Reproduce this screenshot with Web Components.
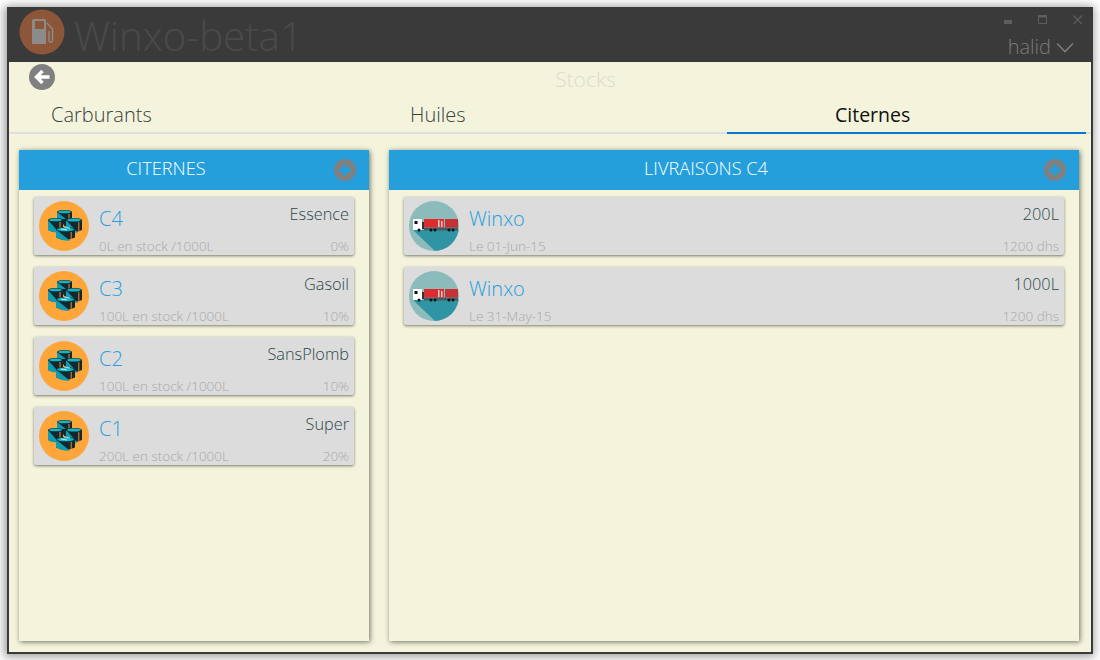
<!DOCTYPE html>
<html><head><meta charset="utf-8"><style>
html,body{margin:0;padding:0;background:#fff;width:1100px;height:660px;overflow:hidden}
body{font-family:"Open Sans","Noto Sans",sans-serif}
</style></head><body>
<app-window>
  <title-bar slot="bar"></title-bar>
  <stock-head></stock-head>
  <tab-bar></tab-bar>
  <div style="display:flex;gap:20px;padding:16px 13px 0 10px;flex:1;min-height:0">
    <list-panel title-text="CITERNES" style="width:350px">
      <tank-card name="C4" kind="Essence" stock="0L en stock /1000L" pct="0%"></tank-card>
      <tank-card name="C3" kind="Gasoil" stock="100L en stock /1000L" pct="10%"></tank-card>
      <tank-card name="C2" kind="SansPlomb" stock="100L en stock /1000L" pct="10%"></tank-card>
      <tank-card name="C1" kind="Super" stock="200L en stock /1000L" pct="20%"></tank-card>
    </list-panel>
    <list-panel title-text="LIVRAISONS C4" style="width:690px">
      <tank-card truck name="Winxo" kind="200L" stock="Le 01-Jun-15" pct="1200 dhs"></tank-card>
      <tank-card truck name="Winxo" kind="1000L" stock="Le 31-May-15" pct="1200 dhs"></tank-card>
    </list-panel>
  </div>
</app-window>
<script>
function def(name,html){customElements.define(name,class extends HTMLElement{connectedCallback(){if(this.shadowRoot)return;const r=this.attachShadow({mode:'open'});r.innerHTML=html(this);}});}
const F='"Open Sans","Noto Sans",sans-serif';
def('app-window',()=>`<style>
:host{display:block;position:absolute;left:7px;top:7px;width:1086px;height:647px;box-sizing:border-box;box-shadow:-1px 1px 9px 2px rgba(0,0,0,.38)}
.w{display:flex;flex-direction:column;height:100%;box-sizing:border-box;background:#f4f4dc;border:2px solid #3a3a3a;border-top:0}
.c{flex:1;display:flex;flex-direction:column;min-height:0;margin-bottom:11px}
</style><div class="w"><slot name="bar"></slot><div class="c"><slot></slot></div></div>`);
def('title-bar',()=>`<style>
:host{display:flex;height:55px;background:#3a3a3a;margin:0 -2px;align-items:center;font-family:${F}}
.logo{width:46px;height:46px;margin:2px 0 0 12px;align-self:flex-start;flex:none}
.t{font-size:40.200px;font-weight:300;color:#4a4a4a;margin-left:9px;line-height:1;padding-top:3px}
.r{margin-left:auto;align-self:stretch;display:flex;flex-direction:column;align-items:flex-end;padding:8px 10px 0 0}
.ctl{display:flex;gap:25px;height:20px;align-items:flex-start}
.u{font-size:20px;font-weight:300;color:#7c7c7c;display:flex;align-items:center;gap:5px;line-height:26px;margin-top:-1px;padding-right:9px}
</style>
<svg class="logo" viewBox="0 0 46 46"><circle cx="23" cy="23" r="22.500" fill="#8e5638"/>
<path d="M13 12a2 2 0 0 1 2-2h10a2 2 0 0 1 2 2V35H13z" fill="#8b8b8b"/>
<rect x="16" y="12" width="9" height="8" fill="#8e5638"/>
<path d="M28 14l5.500 6v11c0 3-3.500 3-3.500 0v-9" fill="none" stroke="#8b8b8b" stroke-width="1.400"/></svg>
<div class="t">Winxo-beta1</div>
<div class="r"><div class="ctl">
<svg width="10" height="10" viewBox="0 0 10 10"><rect x="1" y="5" width="8" height="4" fill="#5e5e5e"/></svg>
<svg width="10" height="10" viewBox="0 0 10 10"><path d="M.5.500h8v8h-8z" fill="none" stroke="#5e5e5e"/><rect width="9" height="2.500" fill="#5e5e5e"/></svg>
<svg width="10" height="10" viewBox="0 0 10 10"><path d="M.5.500l8.500 8.500m0-8.500l-8.500 8.500" stroke="#5e5e5e" stroke-width="1.100" fill="none"/></svg>
</div><div class="u"><span>halid</span><svg width="18" height="11" viewBox="0 0 18 11"><path d="M1 1.500l8 8 8-8" fill="none" stroke="#7c7c7c" stroke-width="1.600"/></svg></div></div>`);
def('stock-head',()=>`<style>
:host{display:flex;height:35px;position:relative;justify-content:center;align-items:center;font-family:${F}}
svg{position:absolute;left:20px;top:2px}
.s{font-size:21px;font-weight:300;color:#dcdccb;padding:0 0 2px 78px;margin-left:-7px}
</style><svg width="26" height="26" viewBox="0 0 26 26"><circle cx="13" cy="13" r="13" fill="#808080"/><path d="M20.500 13H8M13.500 7l-6 6 6 6" fill="none" stroke="#fff" stroke-width="3.400"/></svg><div class="s">Stocks</div>`);
def('tab-bar',()=>`<style>
:host{display:grid;grid-template-columns:359px 359px 359px;height:37px;border-bottom:2px solid #dfdfdf;box-sizing:border-box;font-family:${F};font-size:20px;font-weight:300;color:#38403f;line-height:36px}
div{white-space:nowrap}
.a{color:#111;border-bottom:2px solid #0a78d0;height:37px;box-sizing:border-box;font-weight:400;font-size:19.500px}
</style><div style="padding-left:42px">Carburants</div><div style="padding-left:42px">Huiles</div><div class="a" style="padding-left:108px">Citernes</div>`);
def('list-panel',h=>`<style>
:host{display:flex;flex-direction:column;background:#f4f4dc;box-shadow:1px 1px 5px rgba(0,0,0,.55);font-family:${F};height:491px;flex:none}
.h{height:40px;background:#259fdc;color:#fff;font-size:18.200px;font-weight:300;display:flex;align-items:center;justify-content:center;position:relative;padding:0 56px 4px 0;box-sizing:border-box}
svg{position:absolute;right:13px;top:9px}
.b{display:flex;flex-direction:column;gap:12px;padding:7px 15px}
</style><div class="h"><span>${h.getAttribute('title-text')}</span><svg width="22" height="22" viewBox="0 0 22 22"><circle cx="11" cy="11" r="11" fill="#808080"/><path d="M11 5.500v11M5.500 11h11" stroke="#259fdc" stroke-width="4"/></svg></div><div class="b"><slot></slot></div>`);
const cyl=(cx,top,w,h)=>{const a=w/2,b=w*.13;return `<path d="M${cx-a} ${top+b}V${top+h-b}Q${cx} ${top+h+b} ${cx+a} ${top+h-b}V${top+b}z" fill="#10282e"/><path d="M${cx-a} ${top+b}V${top+h-b}Q${cx-a*.2} ${top+h+b*.7} ${cx+a*.45} ${top+h+b*.2}z" fill="#0f9bb0"/><path d="M${cx+a*.6} ${top+b*2}V${top+h-1}" stroke="#f08a30" stroke-width="1"/><ellipse cx="${cx}" cy="${top+b}" rx="${a}" ry="${b}" fill="#10282e"/><ellipse cx="${cx}" cy="${top+b}" rx="${a-1}" ry="${b-.6}" fill="#12b4c6"/>`;};
const tank=`<svg class="i" width="50" height="50" viewBox="0 0 50 50"><circle cx="25" cy="25" r="25" fill="#ffa63a"/>
${cyl(25.500,9,15,10)}<path d="M21 18L26 26 31 18z" fill="#10282e"/>${cyl(16.500,17,15,14)}${cyl(35,17,16,14)}${cyl(26.500,26,19,13)}<path d="M22 28l6 1m-3-3l6 1" stroke="#e8ffff" stroke-width=".8"/>
</svg>`;
const truck=`<svg class="i" width="50" height="50" viewBox="0 0 50 50"><defs><clipPath id="c"><circle cx="25" cy="25" r="25"/></clipPath></defs><circle cx="25" cy="25" r="25" fill="#8bbcbb"/>
<path d="M4 29H50V50H26z" fill="#2f95a5" clip-path="url(#c)"/>
<g clip-path="url(#c)"><rect x="4" y="18" width="9" height="11" fill="#fff"/><rect x="5.500" y="20" width="3" height="3" fill="#111"/><rect x="13" y="21" width="2" height="7" fill="#333"/><rect x="15" y="18" width="20" height="8.500" fill="#df2a2e"/><rect x="36" y="18" width="13" height="8.500" fill="#c83033"/><rect x="29" y="19" width="1.500" height="7" fill="#f0d0d0"/><rect x="32" y="20" width="1.500" height="6" fill="#f0d0d0"/><rect x="15" y="26.500" width="34" height="3" fill="#4a5a60"/><circle cx="10" cy="29" r="1.500" fill="#111"/><circle cx="22" cy="29" r="1.500" fill="#111"/><circle cx="26" cy="29" r="1.500" fill="#111"/><circle cx="40" cy="29" r="1.500" fill="#111"/><circle cx="44" cy="29" r="1.500" fill="#111"/></g></svg>`;
def('tank-card',h=>`<style>
:host{display:block;height:58px;background:#dcdcdc;border-radius:2px;box-shadow:0 1px 3px rgba(0,0,0,.5);font-family:${F}}
.g{display:flex;height:100%;padding:4px 5px 0 5px;box-sizing:border-box}
.i{flex:none}
.m{flex:1;margin-left:10px;display:flex;flex-direction:column;min-width:0;white-space:nowrap}
.top{display:flex;justify-content:space-between;height:35px}
.n{font-size:20px;font-weight:300;color:#259fdc;line-height:26px;padding-top:5px}
.k{font-size:16.300px;font-weight:300;color:#2a4848;line-height:26px}
.bot{display:flex;justify-content:space-between;font-size:13.500px;font-weight:300;color:#a8a8a8;line-height:18px;padding-top:1px}
</style><div class="g">${h.hasAttribute('truck')?truck:tank}<div class="m"><div class="top"><span class="n">${h.getAttribute('name')}</span><span class="k">${h.getAttribute('kind')}</span></div><div class="bot"><span>${h.getAttribute('stock')}</span><span>${h.getAttribute('pct')}</span></div></div></div>`);
</script></body></html>
